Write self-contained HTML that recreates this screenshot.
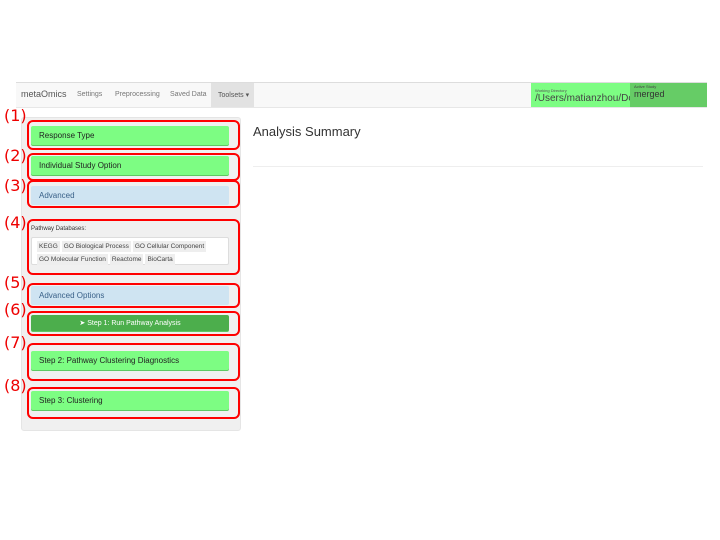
<!DOCTYPE html><html><head><style>
body{margin:0;width:720px;height:540px;background:#fff;font-family:"Liberation Sans",sans-serif;position:relative;overflow:hidden}
.a{position:absolute}
.nav{left:16px;top:82px;width:691px;height:24px;background:#f8f8f8;border-top:1px solid #ddd;border-bottom:1px solid #e7e7e7}
.nt{font-size:7px;color:#777;top:91px}
.btn{position:absolute;left:31px;width:198px;height:19px;background:#7dfd83;border-radius:2px;font-size:8px;color:#222;line-height:19px;box-sizing:border-box;padding-left:8px;box-shadow:0 1px 0 #5fc864}
.blue{background:#cfe4f2;color:#3a6189;box-shadow:none}
.red{position:absolute;left:27px;width:213px;border:2px solid #f00;border-radius:6px;box-sizing:border-box}
.lab{position:absolute;left:4px;color:#e00;font-size:16px;font-family:"DejaVu Sans",sans-serif}
.tag{display:inline-block;background:#eee;padding:0 2px;margin:1px 1px}
</style></head><body>
<div class="a nav"></div>
<div class="a" style="left:21px;top:89px;font-size:9px;color:#555">metaOmics</div>
<div class="a nt" style="left:77px">Settings</div>
<div class="a nt" style="left:115px">Preprocessing</div>
<div class="a nt" style="left:170px">Saved Data</div>
<div class="a" style="left:211px;top:83px;width:43px;height:24px;background:#e2e2e2"></div>
<div class="a nt" style="left:218px;color:#555">Toolsets ▾</div>
<div class="a" style="left:531px;top:83px;width:99px;height:24px;background:#7dfd83;overflow:hidden"><div style="font-size:4px;color:#555;margin:5px 0 0 4px">Working Directory</div><div style="font-size:10px;color:#444;margin-left:4px;white-space:nowrap">/Users/matianzhou/Doc</div></div>
<div class="a" style="left:630px;top:83px;width:77px;height:24px;background:#66cc66"><div style="font-size:4px;color:#444;margin:1px 0 0 4px">Active Study</div><div style="font-size:9px;color:#333;margin-left:4px">merged</div></div>
<div class="a" style="left:21px;top:117px;width:218px;height:312px;background:#f0f0f0;border-radius:3px;border:1px solid #e5e5e5"></div>
<div class="a" style="left:253px;top:124px;font-size:13px;color:#333">Analysis Summary</div>
<div class="a" style="left:253px;top:166px;width:450px;height:1px;background:#eee"></div>
<div class="btn" style="top:126px">Response Type</div>
<div class="btn" style="top:156px">Individual Study Option</div>
<div class="btn blue" style="top:186px">Advanced</div>
<div class="a" style="left:31px;top:226px;font-size:6px;color:#333">Pathway Databases:</div>
<div class="a" style="left:31px;top:237px;width:198px;height:28px;background:#fff;border:1px solid #ddd;border-radius:2px;box-sizing:border-box;font-size:6.5px;color:#444;padding:2px 4px;line-height:11px"><span class="tag">KEGG</span><span class="tag">GO Biological Process</span><span class="tag">GO Cellular Component</span><br><span class="tag">GO Molecular Function</span><span class="tag">Reactome</span><span class="tag">BioCarta</span></div>
<div class="btn blue" style="top:286px">Advanced Options</div>
<div class="btn" style="top:315px;height:16px;line-height:17px;background:#4cae4c;color:#fff;text-align:center;padding:0;font-size:7px">➤ Step 1: Run Pathway Analysis</div>
<div class="btn" style="top:351px">Step 2: Pathway Clustering Diagnostics</div>
<div class="btn" style="top:391px">Step 3: Clustering</div>
<div class="red" style="top:120px;height:30px"></div>
<div class="red" style="top:153px;height:28px"></div>
<div class="red" style="top:180px;height:28px"></div>
<div class="red" style="top:219px;height:56px"></div>
<div class="red" style="top:283px;height:25px"></div>
<div class="red" style="top:311px;height:25px"></div>
<div class="red" style="top:343px;height:38px"></div>
<div class="red" style="top:387px;height:32px"></div>
<div class="lab" style="top:106px">(1)</div>
<div class="lab" style="top:146px">(2)</div>
<div class="lab" style="top:176px">(3)</div>
<div class="lab" style="top:213px">(4)</div>
<div class="lab" style="top:273px">(5)</div>
<div class="lab" style="top:300px">(6)</div>
<div class="lab" style="top:333px">(7)</div>
<div class="lab" style="top:376px">(8)</div>
</body></html>
